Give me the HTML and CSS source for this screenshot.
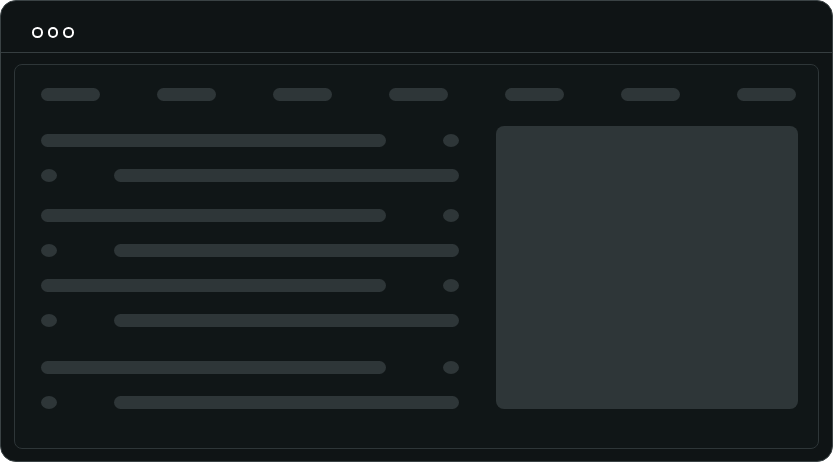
FILE: index.html
```html
<!DOCTYPE html>
<html lang="en">
<head>
<meta charset="utf-8">
<title>Wireframe</title>
<link rel="stylesheet" href="styles.css">
</head>
<body>
<div class="frame">
  <div class="titlebar">
    <span class="dot"></span><span class="dot"></span><span class="dot"></span>
  </div>
  <div class="panel">
    <nav class="nav">
      <span class="pill"></span><span class="pill"></span><span class="pill"></span><span class="pill"></span><span class="pill"></span><span class="pill"></span><span class="pill"></span>
    </nav>
    <div class="main">
      <div class="list">
        <div class="group g1">
          <div class="row"><span class="bar"></span><span class="knob"></span></div>
          <div class="row"><span class="knob"></span><span class="bar"></span></div>
        </div>
        <div class="group g2">
          <div class="row"><span class="bar"></span><span class="knob"></span></div>
          <div class="row"><span class="knob"></span><span class="bar"></span></div>
        </div>
        <div class="group g3">
          <div class="row"><span class="bar"></span><span class="knob"></span></div>
          <div class="row"><span class="knob"></span><span class="bar"></span></div>
        </div>
        <div class="group g4">
          <div class="row"><span class="bar"></span><span class="knob"></span></div>
          <div class="row"><span class="knob"></span><span class="bar"></span></div>
        </div>
      </div>
      <div class="media"></div>
    </div>
  </div>
</div>
</body>
</html>
```

FILE: styles.css
```css
* { box-sizing: border-box; }
html, body {
  margin: 0;
  padding: 0;
  background: #ffffff;
  font-family: "Liberation Sans", Arial, sans-serif;
}
.frame {
  width: 833px;
  height: 462px;
  background: #0f1415;
  border: 1px solid #3a4244;
  border-radius: 16px;
  overflow: hidden;
  display: flex;
  flex-direction: column;
}
.titlebar {
  height: 52px;
  flex: none;
  border-bottom: 1px solid #363e40;
  display: flex;
  gap: 5px;
  padding: 26px 0 0 31px;
}
.dot {
  width: 10.5px;
  height: 10.5px;
  border: 2px solid #ffffff;
  border-radius: 50%;
}
.panel {
  margin: 11px 13px 12px 13px;
  flex: 1;
  border: 1px solid #2e3638;
  border-radius: 8px;
  background: #101617;
  padding: 23px 0 0 26px;
}
.nav {
  display: flex;
  justify-content: space-between;
  padding-right: 22px;
}
.pill {
  width: 59px;
  height: 13px;
  border-radius: 7px;
  background: #2e3638;
}
.main {
  display: flex;
  gap: 37px;
  margin-top: 25px;
  padding-right: 20px;
}
.list {
  width: 418px;
  padding-top: 8px;
}
.group { display: flex; flex-direction: column; gap: 22px; }
.g2 { margin-top: 27px; }
.g3 { margin-top: 22px; }
.g4 { margin-top: 34px; }
.row {
  display: flex;
  justify-content: space-between;
  height: 13px;
}
.bar {
  width: 345px;
  height: 13px;
  border-radius: 7px;
  background: #2e3638;
}
.knob {
  width: 16px;
  height: 13px;
  border-radius: 50%;
  background: #2e3638;
}
.media {
  flex: 1;
  height: 283px;
  border-radius: 8px;
  background: #2e3638;
}
```
